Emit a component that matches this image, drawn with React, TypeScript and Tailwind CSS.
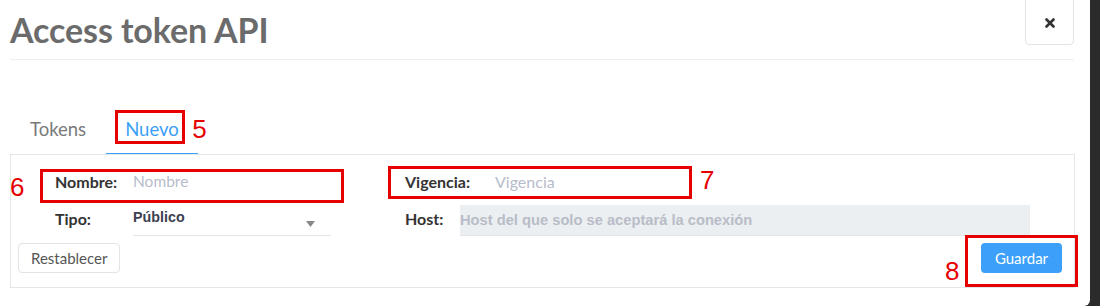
import { X } from 'lucide-react';

const lato = { fontFamily: 'Lato, "Open Sans", sans-serif' };

function Mark({ n, className }: { n: string; className: string }) {
  return (
    <span
      className={`absolute text-[26px] leading-none text-[#e60000] ${className}`}
      style={{ fontFamily: '"Liberation Sans", Arial, sans-serif' }}
    >
      {n}
    </span>
  );
}

export default function App() {
  return (
    <div className="w-[1100px] h-[306px] bg-[#2b2b2b] overflow-hidden" style={lato}>
      <div className="relative w-[1090px] h-[306px] bg-white rounded-br-[6px]">
        {/* Header */}
        <div className="ml-[10px] w-[1064px] h-[60px] border-b border-[#eeeeee] flex items-start justify-between">
          <h1 className="mt-[10px] text-[34px] leading-[40px] font-bold text-[#6b6b6b] tracking-[-0.1px]">
            Access token API
          </h1>
          <button className="-mt-[4px] w-[49px] h-[49px] border border-[#e3e3e3] rounded-[4px] flex items-center justify-center pt-[4px] text-[#333]">
            <X size={14} strokeWidth={4.5} />
          </button>
        </div>

        {/* Tabs */}
        <div className="ml-[10px] mt-[46px] flex items-end h-[49px]">
          <div className="px-[20px] pb-[15px] text-[18.5px] leading-[22px] text-[#7a7a7a]">Tokens</div>
          <div className="relative px-[19px] pb-[13px] text-[18.5px] leading-[22px] text-[#3a9ff5] border-b-2 border-[#3a9ff5]">
            Nuevo
            <div className="absolute left-[9px] top-[-8px] w-[70px] h-[34px] border-[3px] border-[#e60000]" />
            <Mark n="5" className="left-[86px] top-[-2px]" />
          </div>
        </div>

        {/* Panel */}
        <div className="relative ml-[10px] w-[1065px] h-[134px] border border-[#e4e7ea] -mt-px">
          <div className="pt-[9px]">
            {/* Row 1 */}
            <div className="flex items-center h-[36px]">
              <div className="relative pl-[44px] flex items-center w-[394px]">
                <span className="w-[78px] text-[16px] font-bold text-[#333]">Nombre:</span>
                <span className="w-[198px] text-[15.5px] text-[#b7bccb]">Nombre</span>
                <div className="absolute left-[29px] top-[-1px] w-[304px] h-[34px] border-[3px] border-[#e60000]" />
                <Mark n="6" className="left-[-1px] top-[4px]" />
              </div>
              <div className="relative flex items-center">
                <span className="w-[90px] text-[16px] font-bold text-[#333]">Vigencia:</span>
                <span className="w-[180px] text-[16px] text-[#b7bccb]">Vigencia</span>
                <div className="absolute left-[-17px] top-[-4px] w-[304px] h-[33px] border-[3px] border-[#e60000]" />
                <Mark n="7" className="left-[295px] top-[-3px]" />
              </div>
            </div>

            {/* Row 2 */}
            <div className="flex items-start h-[36px]">
              <div className="pl-[44px] flex w-[394px]">
                <span className="w-[78px] pt-[7px] text-[16px] font-bold text-[#333]">Tipo:</span>
                <div className="relative w-[198px] h-[36px] border-b border-[#e4e7ea]">
                  <span
                    className="block pt-[7px] text-[14.3px] font-bold text-[#3d4050]"
                    style={{ fontFamily: '"Liberation Sans", Arial, sans-serif' }}
                  >
                    Público
                  </span>
                  <svg className="absolute right-[16px] top-[21px]" width="9" height="6" viewBox="0 0 9 6">
                    <path d="M0 0 H9 L4.5 6 Z" fill="#888" />
                  </svg>
                </div>
              </div>
              <div className="flex">
                <span className="w-[55px] pt-[7px] text-[16px] font-bold text-[#333]">Host:</span>
                <div
                  className="w-[570px] h-[31px] mt-[5px] bg-[#eceff1] border-b border-[#e2e6ea] pt-[4px] text-[14.7px] font-bold text-[#b8bdc8]"
                  style={{ fontFamily: '"Liberation Sans", Arial, sans-serif' }}
                >
                  Host del que solo se aceptará la conexión
                </div>
              </div>
            </div>

            {/* Row 3 */}
            <div className="flex items-start justify-between mt-[7px] pl-[7px] pr-[12px]">
              <button className="h-[30px] px-[12px] border border-[#e3e3e3] rounded-[4px] text-[15px] text-[#555]">
                Restablecer
              </button>
              <div className="relative">
                <button className="h-[30px] w-[81px] rounded-[4px] bg-[#3ca0fb] text-white text-[15px]">
                  Guardar
                </button>
                <div className="absolute left-[-16px] top-[-8px] w-[113px] h-[52px] border-[3px] border-[#e60000]" />
                <Mark n="8" className="left-[-36px] top-[15px]" />
              </div>
            </div>
          </div>
        </div>
      </div>
    </div>
  );
}
